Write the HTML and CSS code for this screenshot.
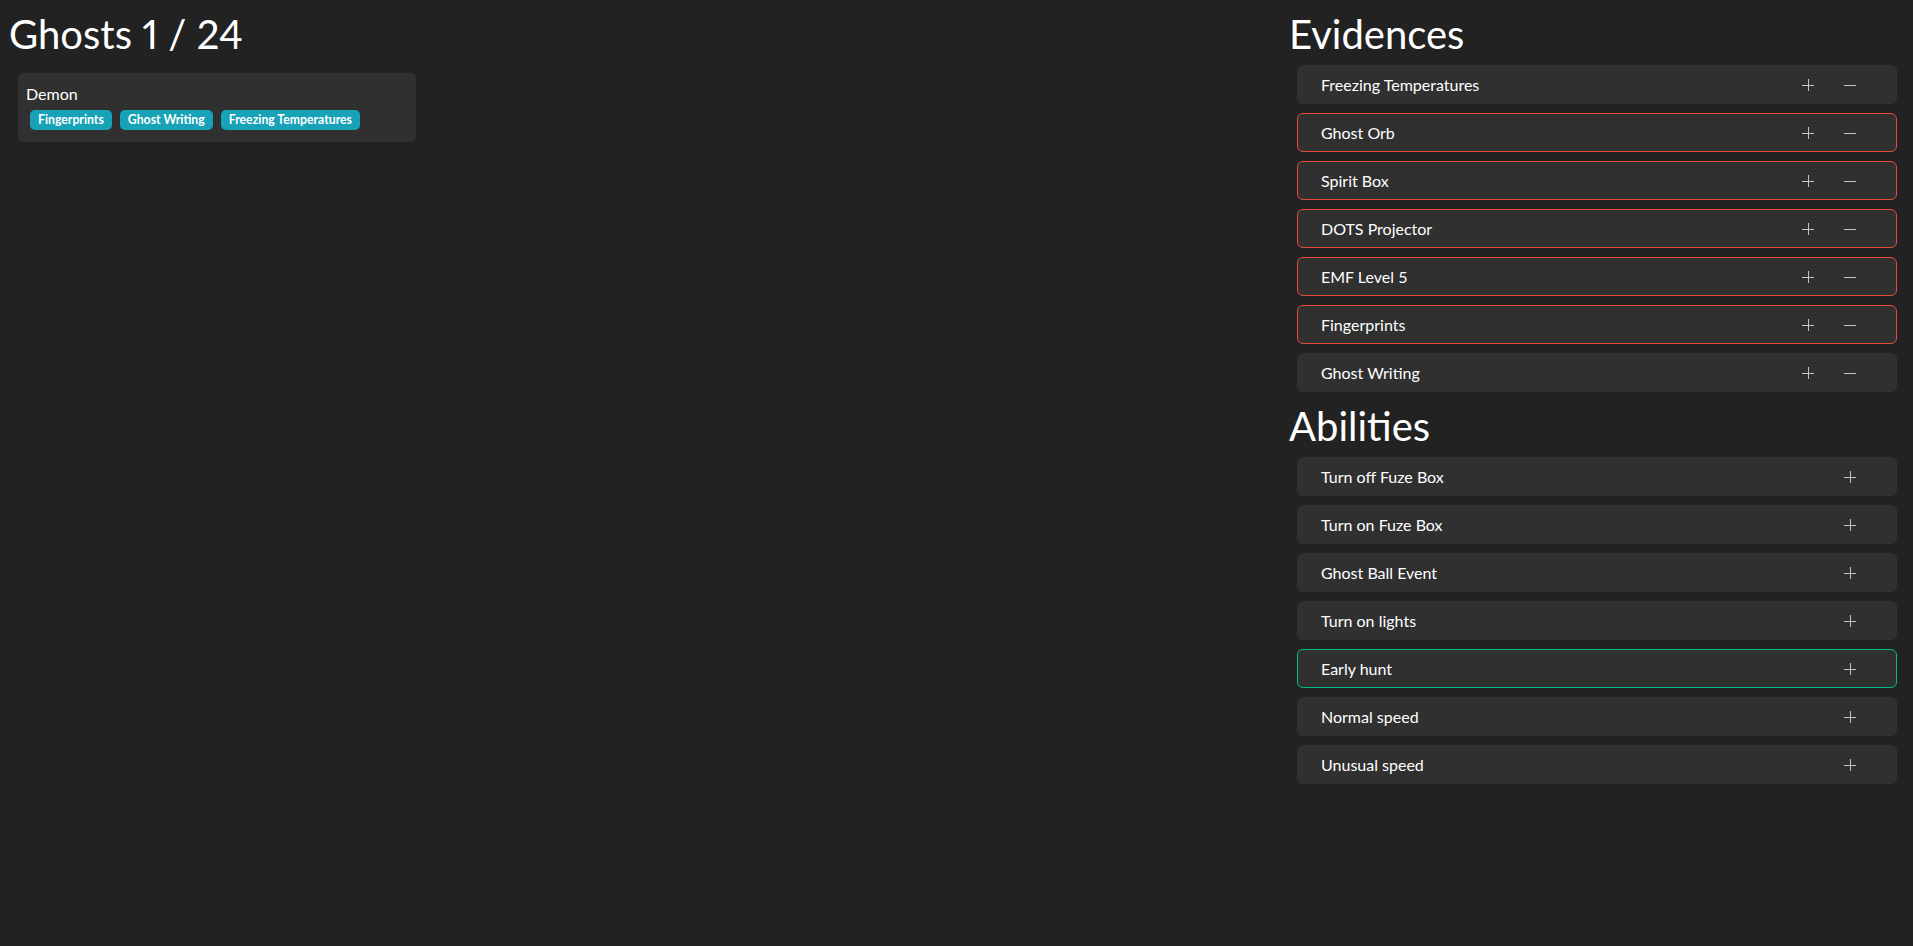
FILE: index.html
```html
<!DOCTYPE html>
<html lang="en">
<head>
<meta charset="utf-8">
<title>Ghosts</title>
<link rel="stylesheet" href="styles.css">
</head>
<body>
<div class="page">
  <main class="ghosts">
    <h1 class="title">Ghosts 1 / 24</h1>
    <div class="ghost-card">
      <div class="ghost-name">Demon</div>
      <div class="badges">
        <span class="badge">Fingerprints</span>
        <span class="badge">Ghost Writing</span>
        <span class="badge">Freezing Temperatures</span>
      </div>
    </div>
  </main>
  <aside class="filters">
    <h1 class="title">Evidences</h1>
    <ul class="list">
      <li class="item"><span class="label">Freezing Temperatures</span><span class="actions"><span class="icon plus"></span><span class="icon minus"></span></span></li>
      <li class="item excluded"><span class="label">Ghost Orb</span><span class="actions"><span class="icon plus"></span><span class="icon minus"></span></span></li>
      <li class="item excluded"><span class="label">Spirit Box</span><span class="actions"><span class="icon plus"></span><span class="icon minus"></span></span></li>
      <li class="item excluded"><span class="label">DOTS Projector</span><span class="actions"><span class="icon plus"></span><span class="icon minus"></span></span></li>
      <li class="item excluded"><span class="label">EMF Level 5</span><span class="actions"><span class="icon plus"></span><span class="icon minus"></span></span></li>
      <li class="item excluded"><span class="label">Fingerprints</span><span class="actions"><span class="icon plus"></span><span class="icon minus"></span></span></li>
      <li class="item"><span class="label">Ghost Writing</span><span class="actions"><span class="icon plus"></span><span class="icon minus"></span></span></li>
    </ul>
    <h1 class="title title-spaced">Abilities</h1>
    <ul class="list">
      <li class="item"><span class="label">Turn off Fuze Box</span><span class="actions"><span class="icon plus"></span></span></li>
      <li class="item"><span class="label">Turn on Fuze Box</span><span class="actions"><span class="icon plus"></span></span></li>
      <li class="item"><span class="label">Ghost Ball Event</span><span class="actions"><span class="icon plus"></span></span></li>
      <li class="item"><span class="label">Turn on lights</span><span class="actions"><span class="icon plus"></span></span></li>
      <li class="item included"><span class="label">Early hunt</span><span class="actions"><span class="icon plus"></span></span></li>
      <li class="item"><span class="label">Normal speed</span><span class="actions"><span class="icon plus"></span></span></li>
      <li class="item"><span class="label">Unusual speed</span><span class="actions"><span class="icon plus"></span></span></li>
    </ul>
  </aside>
</div>
</body>
</html>
```

FILE: styles.css
```css
* { box-sizing: border-box; }

html, body {
  margin: 0;
  background: #222222;
  color: #ffffff;
  font-family: Lato, "Noto Sans", sans-serif;
  font-size: 16px;
  line-height: 24px;
}

.page {
  display: flex;
  padding: 10px 12px 0 8px;
  min-height: 946px;
}

.ghosts {
  flex: 1;
  min-width: 0;
}

.filters {
  width: 614px;
  flex: none;
}

.title {
  margin: 0 0 7px 1px;
  font-size: 40px;
  line-height: 48px;
  font-weight: 400;
  font-variant-numeric: proportional-nums;
}

.filters .title {
  margin-left: 2px;
}

.filters .title-spaced {
  margin-top: 10px;
}

.ghost-card {
  margin: 15px 0 0 10px;
  width: 398px;
  background: #303030;
  border-radius: 5px;
  padding: 9px 8px 12px;
}

.ghost-name {
  font-size: 16px;
  line-height: 24px;
}

.badges {
  display: flex;
  gap: 8px;
  margin-top: 4px;
  padding-left: 4px;
}

.badge {
  display: inline-flex;
  align-items: center;
  height: 20px;
  padding: 0 8px;
  background: #17a2b8;
  border-radius: 5px;
  color: #ffffff;
  font-size: 12.25px;
  font-weight: 700;
  line-height: 1;
}

.list {
  list-style: none;
  margin: 0 4px 0 10px;
  padding: 0;
  display: flex;
  flex-direction: column;
  gap: 9px;
}

.item {
  display: flex;
  align-items: center;
  justify-content: space-between;
  height: 39px;
  padding: 0 40px 0 23px;
  background: #303030;
  border: 1px solid #303030;
  border-radius: 6px;
}

.item.excluded { border-color: #e74c3c; }
.item.included { border-color: #00bc8c; }

.label {
  color: #ffffff;
}

.actions {
  display: flex;
  align-items: center;
  gap: 30px;
}

.icon {
  position: relative;
  width: 12px;
  height: 12px;
  display: block;
}

.icon::before,
.icon::after {
  content: "";
  position: absolute;
  background: #c4c4c4;
}

.icon::before {
  left: 0;
  right: 0;
  top: 6px;
  height: 1px;
}

.plus::after {
  top: 0;
  bottom: 0;
  left: 6px;
  width: 1px;
}

.minus::after { display: none; }
```
